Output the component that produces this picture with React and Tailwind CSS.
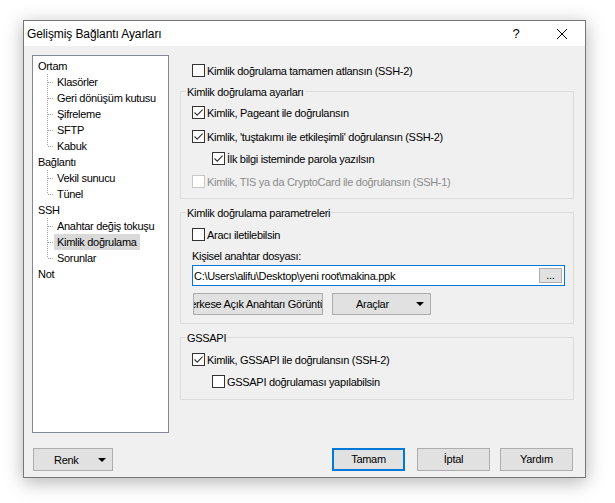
import React from 'react';

const tree = [
  { label: 'Ortam', children: ['Klasörler', 'Geri dönüşüm kutusu', 'Şifreleme', 'SFTP', 'Kabuk'] },
  { label: 'Bağlantı', children: ['Vekil sunucu', 'Tünel'] },
  { label: 'SSH', children: ['Anahtar değiş tokuşu', 'Kimlik doğrulama', 'Sorunlar'] },
  { label: 'Not', children: [] },
];

function Check({ checked, disabled }) {
  return (
    <span
      className={`flex h-[13px] w-[13px] shrink-0 items-center justify-center border bg-white ${
        disabled ? 'border-[#c8c8c8]' : 'border-[#333333]'
      }`}
    >
      {checked && (
        <svg width="11" height="11" viewBox="0 0 11 11">
          <path d="M1.5 5.5 L4.2 8.2 L9.6 2.6" fill="none" stroke="#333333" strokeWidth="1.1" />
        </svg>
      )}
    </span>
  );
}

function CheckRow({ label, checked, disabled, className = '' }) {
  return (
    <div className={`flex h-[17px] items-center gap-[2px] ${className}`}>
      <Check checked={checked} disabled={disabled} />
      <span className={`whitespace-nowrap leading-[16px] ${disabled ? 'text-[#8b8b8b]' : 'text-black'}`}>{label}</span>
    </div>
  );
}

function Group({ title, className = '', children }) {
  return (
    <div className={`flex flex-col border border-[#dcdcdc] ${className}`}>
      <span className="-mt-[8px] ml-[5px] h-[16px] w-fit bg-[#f0f0f0] px-[1px] leading-[16px]">{title}</span>
      {children}
    </div>
  );
}

function Arrow() {
  return (
    <svg width="8" height="4" viewBox="0 0 8 4" className="ml-auto mr-[6px] shrink-0">
      <polygon points="0,0 8,0 4,4" fill="#000" />
    </svg>
  );
}

function Connector({ last }) {
  return (
    <svg width="21" height="16" className="shrink-0">
      <line x1="14.5" y1="0" x2="14.5" y2={last ? 8 : 16} stroke="#a0a0a0" strokeDasharray="1 1" />
      <line x1="15" y1="8.5" x2="21" y2="8.5" stroke="#a0a0a0" strokeDasharray="1 1" />
    </svg>
  );
}

export default function App() {
  return (
    <div className="min-h-screen bg-white pl-[23px] pt-[20px] font-['Liberation_Sans',Arial,sans-serif] text-[11px] tracking-[-0.3px] text-black">
      <div className="flex h-[458px] w-[563px] flex-col border border-[#777777] bg-[#f0f0f0] shadow-[0_4px_18px_rgba(0,0,0,0.3)]">
        {/* title bar */}
        <div className="flex h-[25px] shrink-0 items-center bg-white pl-[3px]">
          <span className="text-[12px] leading-[16px] tracking-[-0.1px]">Gelişmiş Bağlantı Ayarları</span>
          <span className="ml-auto flex h-full w-[46px] items-center justify-center text-[13px]">?</span>
          <span className="flex h-full w-[46px] items-center justify-center">
            <svg width="10" height="10" viewBox="0 0 10 10">
              <path d="M0 0 L10 10 M10 0 L0 10" stroke="#000" strokeWidth="1" />
            </svg>
          </span>
        </div>

        <div className="flex flex-1 flex-col px-[8px] pb-[6px] pt-[9px]">
          <div className="flex h-[378px] items-start gap-[11px]">
            {/* tree */}
            <div className="h-full w-[137px] shrink-0 border border-[#828790] bg-white pt-[2px]">
              {tree.map((node) => (
                <div key={node.label}>
                  <div className="flex h-[16px] pl-[2px]">
                    <span className="px-[3px] leading-[16px]">{node.label}</span>
                  </div>
                  {node.children.map((c, i) => (
                    <div key={c} className="flex h-[16px]">
                      <Connector last={i === node.children.length - 1} />
                      <span
                        className={`whitespace-nowrap px-[3px] leading-[16px] ${
                          c === 'Kimlik doğrulama' ? 'bg-[#d9d9d9]' : ''
                        }`}
                      >
                        {c}
                      </span>
                    </div>
                  ))}
                </div>
              ))}
            </div>

            {/* settings */}
            <div className="flex w-[394px] flex-col">
              <CheckRow className="ml-[12px] mt-[7px]" label="Kimlik doğrulama tamamen atlansın (SSH-2)" />

              <Group title="Kimlik doğrulama ayarları" className="mt-[12px] h-[108px]">
                <CheckRow className="ml-[11px] mt-[4px]" checked label="Kimlik, Pageant ile doğrulansın" />
                <CheckRow className="ml-[11px] mt-[7px]" checked label="Kimlik, 'tuştakımı ile etkileşimli' doğrulansın (SSH-2)" />
                <CheckRow className="ml-[31px] mt-[5px]" checked label="İlk bilgi isteminde parola yazılsın" />
                <CheckRow className="ml-[11px] mt-[6px]" disabled label="Kimlik, TIS ya da CryptoCard ile doğrulansın (SSH-1)" />
              </Group>

              <Group title="Kimlik doğrulama parametreleri" className="mt-[13px] h-[112px]">
                <CheckRow className="ml-[11px] mt-[5px]" label="Aracı iletilebilsin" />
                <span className="ml-[11px] mt-[5px] h-[16px] leading-[16px]">Kişisel anahtar dosyası:</span>
                <div className="ml-[11px] mt-[1px] flex h-[21px] w-[373px] items-center border border-[#0078d7] bg-white pl-[1px]">
                  <span className="whitespace-nowrap leading-[16px]">{'C:\\Users\\alifu\\Desktop\\yeni root\\makina.ppk'}</span>
                  <span className="ml-auto mr-[2px] flex h-[15px] w-[23px] items-end justify-center border border-[#adadad] bg-[#e1e1e1] text-[11px] leading-[13px]">
                    ...
                  </span>
                </div>
                <div className="ml-[12px] mt-[7px] flex h-[22px] gap-[9px]">
                  <div className="flex w-[130px] items-center justify-center overflow-hidden whitespace-nowrap border border-[#adadad] bg-[#e1e1e1]">
                    <span className="shrink-0 leading-[16px]">Herkese Açık Anahtarı Görüntüle</span>
                  </div>
                  <div className="flex w-[99px] items-center border border-[#adadad] bg-[#e1e1e1] pl-[23px]">
                    <span className="leading-[16px]">Araçlar</span>
                    <Arrow />
                  </div>
                </div>
              </Group>

              <Group title="GSSAPI" className="mt-[13px] h-[63px]">
                <CheckRow className="ml-[11px] mt-[5px]" checked label="Kimlik, GSSAPI ile doğrulansın (SSH-2)" />
                <CheckRow className="ml-[31px] mt-[5px]" label="GSSAPI doğrulaması yapılabilsin" />
              </Group>
            </div>
          </div>

          {/* buttons */}
          <div className="mt-[15px] flex h-[23px] pr-[4px]">
            <div className="ml-[1px] flex w-[80px] items-center border border-[#adadad] bg-[#e1e1e1] pl-[20px]">
              <span className="leading-[16px]">Renk</span>
              <Arrow />
            </div>
            <div className="ml-auto flex w-[73px] items-center justify-center border-2 border-[#0078d7] bg-[#e1e1e1]">
              Tamam
            </div>
            <div className="ml-[12px] flex w-[73px] items-center justify-center border border-[#adadad] bg-[#e1e1e1]">
              İptal
            </div>
            <div className="ml-[10px] flex w-[73px] items-center justify-center border border-[#adadad] bg-[#e1e1e1]">
              Yardım
            </div>
          </div>
        </div>
      </div>
    </div>
  );
}
